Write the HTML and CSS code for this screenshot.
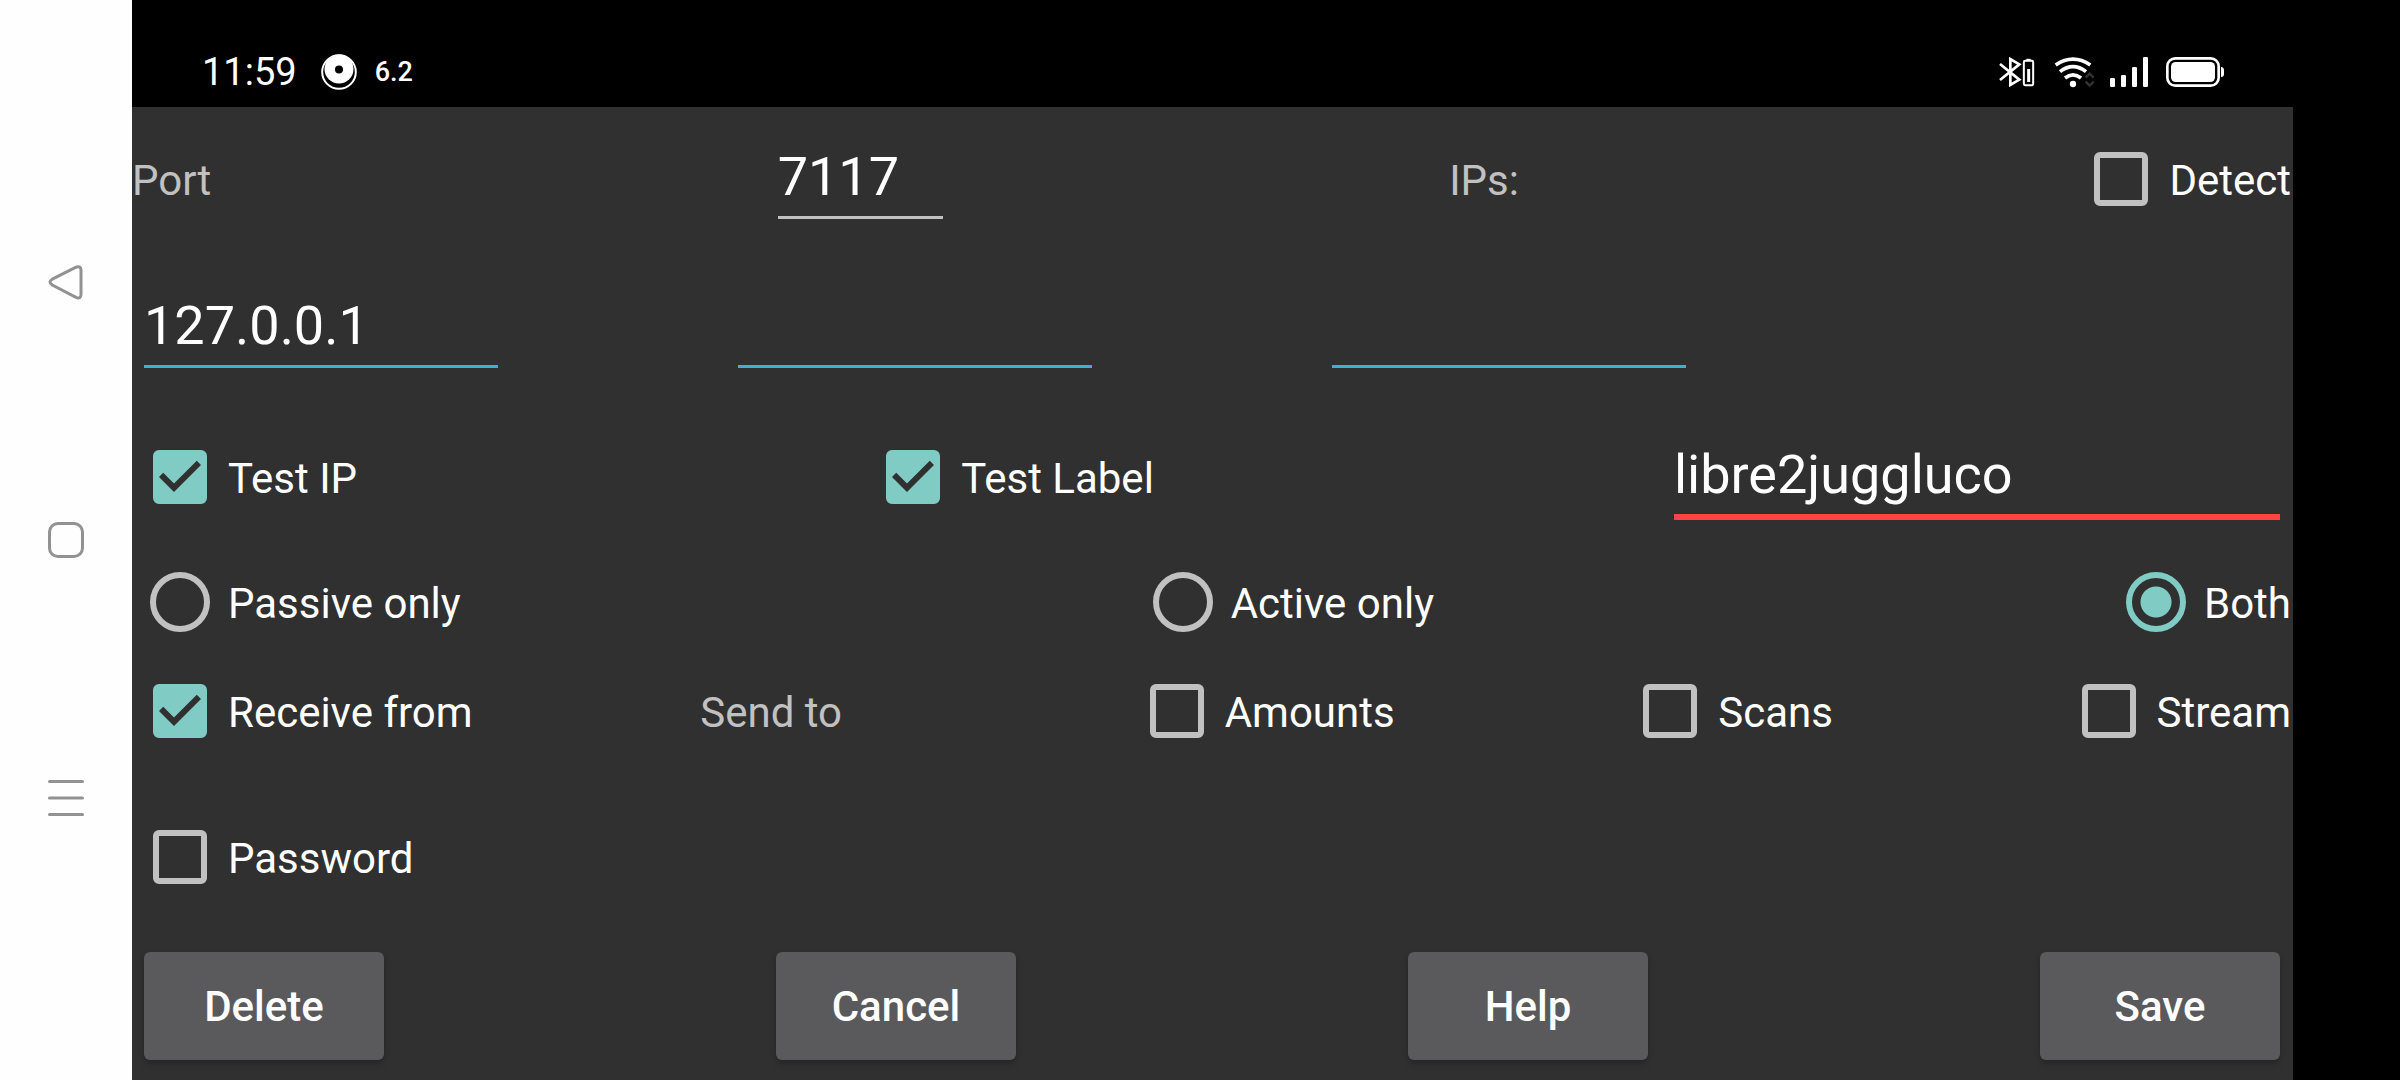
FILE: index.html
```html
<!DOCTYPE html>
<html lang="en">
<head>
<meta charset="utf-8">
<title>Connection</title>
<link rel="stylesheet" href="styles.css">
</head>
<body>
<nav class="nav" aria-label="System">
  <button class="nav-button" type="button" aria-label="Back">
    <svg viewBox="0 0 36 36"><path d="M4.300 15.200 L28 3.200 Q33 1.600 33 6 V30.500 Q33 35.400 28 33.300 L4.300 21 Q-0.400 18 4.300 15.200Z"/></svg>
  </button>
  <button class="nav-button" type="button" aria-label="Home">
    <svg viewBox="0 0 36 36"><rect x="1.500" y="1.500" width="33" height="33" rx="8.500"/></svg>
  </button>
  <button class="nav-button" type="button" aria-label="Menu">
    <svg viewBox="0 0 36 36"><path stroke-linecap="round" d="M1.500 1.500H34.500M1.500 18H34.500M1.500 34.500H34.500"/></svg>
  </button>
</nav>

<div class="screen">
  <header class="status">
    <div class="status-left">
      <span class="clock">11:59</span>
      <svg class="ring" viewBox="0 0 36 36"><circle cx="18" cy="18" r="16.800" fill="none" stroke="#fff" stroke-width="2"/><circle cx="18" cy="15" r="14.500" fill="#fff"/><circle cx="18" cy="15.500" r="4" fill="#000"/></svg>
      <span class="reading">6.2</span>
    </div>
    <div class="status-right">
      <svg width="36" height="32" viewBox="117 78 108 96" fill="none" stroke="#fff">
        <path stroke-width="8" d="M120 102 L178 149 L151 165 V87 L178 103 L120 150"/>
        <rect x="191.500" y="92.500" width="28" height="73" rx="4" stroke-width="6"/>
        <path stroke-width="6" d="M199 89.500H212"/><path stroke-width="9" d="M206 117V156"/>
      </svg>
      <svg width="39" height="32" viewBox="279 78 117 96" fill="none" stroke="#fff">
        <path stroke-width="11" d="M287 105 Q339 70 391 105"/>
        <path stroke-width="11" d="M300 125 Q339 95 378 125"/>
        <path stroke-width="11" d="M315 144 Q339 125 363 144"/>
        <circle cx="339" cy="162" r="9.500" fill="#fff" stroke="none"/>
        <path stroke="#333" stroke-width="7" d="M377 143 L389 131 L401 143M377 155 L389 167 L401 155"/>
      </svg>
      <svg width="38" height="32" viewBox="450 78 114 96" fill="#fff">
        <rect x="450" y="144" width="15" height="27" rx="4"/><rect x="483" y="135" width="15" height="36" rx="4"/><rect x="516" y="111" width="15" height="60" rx="4"/><rect x="549" y="81" width="15" height="90" rx="4"/>
      </svg>
      <svg width="59" height="32" viewBox="618 78 177 96" fill="#fff">
        <rect x="622" y="85" width="154" height="82" rx="24" fill="none" stroke="#fff" stroke-width="8"/>
        <rect x="633" y="96" width="132" height="60" rx="14"/>
        <path d="M783 110 Q792 112 792 120 V132 Q792 140 783 142Z"/>
      </svg>
    </div>
  </header>

  <form class="form">
    <div class="row">
      <label class="caption" for="port">Port</label>
      <input class="field field-port" id="port" type="text" value="7117">
      <span class="caption">IPs:</span>
      <label class="choice"><input type="checkbox"><span>Detect</span></label>
    </div>
    <div class="row row-addresses">
      <input class="field field-address" type="text" aria-label="First IP" value="127.0.0.1">
      <input class="field field-address" type="text" aria-label="Second IP">
      <input class="field field-address" type="text" aria-label="Third IP">
    </div>
    <div class="row row-tests">
      <label class="choice"><input type="checkbox" checked><span>Test IP</span></label>
      <label class="choice"><input type="checkbox" checked><span>Test Label</span></label>
      <input class="field field-label" type="text" aria-label="Label" value="libre2juggluco">
    </div>
    <div class="row row-mode">
      <label class="choice"><input type="radio" name="mode"><span>Passive only</span></label>
      <label class="choice"><input type="radio" name="mode"><span>Active only</span></label>
      <label class="choice"><input type="radio" name="mode" checked><span>Both</span></label>
    </div>
    <div class="row row-data">
      <label class="choice"><input type="checkbox" checked><span>Receive from</span></label>
      <span class="caption">Send to</span>
      <label class="choice"><input type="checkbox"><span>Amounts</span></label>
      <label class="choice"><input type="checkbox"><span>Scans</span></label>
      <label class="choice"><input type="checkbox"><span>Stream</span></label>
    </div>
    <div class="row row-password">
      <label class="choice"><input type="checkbox"><span>Password</span></label>
    </div>
    <div class="actions">
      <button class="action" type="button">Delete</button>
      <button class="action" type="button">Cancel</button>
      <button class="action" type="button">Help</button>
      <button class="action" type="button">Save</button>
    </div>
  </form>
</div>
</body>
</html>
```

FILE: styles.css
```css
* {
  box-sizing: border-box;
}

body {
  margin: 0;
  min-height: 100vh;
  display: flex;
  padding-right: 107px;
  background: #000;
  color: #fff;
  font-family: Roboto, "Liberation Sans", sans-serif;
  font-size: 42px;
}

svg {
  display: block;
  overflow: visible;
}

.nav {
  width: 132px;
  flex: none;
  display: flex;
  flex-direction: column;
  align-items: center;
  justify-content: center;
  gap: 222px;
  background: #fefefe;
}

.nav-button {
  width: 36px;
  height: 36px;
  padding: 0;
  border: 0;
  background: none;
}

.nav-button svg {
  fill: none;
  stroke: #929292;
  stroke-width: 3;
}

.screen {
  flex: 1;
  min-width: 0;
  display: flex;
  flex-direction: column;
}

.status {
  height: 107px;
  padding: 37px 68px 0 70px;
  display: flex;
  align-items: center;
  justify-content: space-between;
}

.status-left,
.status-right {
  display: flex;
  align-items: center;
  gap: 18px;
}

.clock {
  margin-right: 6px;
  font-size: 38px;
}

.ring {
  width: 36px;
  height: 36px;
}

.reading {
  font-size: 27px;
  font-weight: 500;
}

.form {
  flex: 1;
  padding: 24px 1px 20px 0;
  background: #303030;
}

.row {
  height: 96px;
  display: flex;
  align-items: center;
  justify-content: space-between;
}

.row-addresses,
.row-tests {
  margin-top: 53px;
}

.row-mode {
  margin-top: 29px;
}

.row-data {
  margin-top: 13px;
}

.row-password {
  margin-top: 50px;
}

.row-addresses {
  display: grid;
  grid-template-columns: repeat(4, 378px);
}

.caption {
  padding: 2px 60px 0 0;
  color: #c1c1c1;
}

.choice {
  display: flex;
  align-items: center;
  white-space: nowrap;
}

.choice span {
  padding: 2px 1px 0 0;
}

.choice input {
  appearance: none;
  flex: none;
  width: 54px;
  height: 54px;
  margin: 0 21px;
  border: 6px solid #c1c1c1;
  border-radius: 6px;
}

.choice input[type="checkbox"]:checked {
  border-color: #80cbc4;
  background: #80cbc4 url("data:image/svg+xml,%3Csvg xmlns='http://www.w3.org/2000/svg' viewBox='3 3 18 18'%3E%3Cpath fill='%23303030' d='M10 17l-5-5 1.410-1.410L10 14.170l7.590-7.590L19 8z'/%3E%3C/svg%3E") border-box center / 54px 54px no-repeat;
}

.choice input[type="radio"] {
  width: 60px;
  height: 60px;
  margin: 0 18px;
  border-radius: 50%;
}

.choice input[type="radio"]:checked {
  border-color: #80cbc4;
  background: radial-gradient(circle, #80cbc4 15px, transparent 16px);
}

.field {
  min-width: 0;
  margin: 14px 12px 8px;
  padding: 0 0 8px;
  border: 0;
  border-bottom: 3px solid #c1c1c1;
  border-radius: 0;
  outline: 0;
  background: none;
  color: #fff;
  font: 54px/63px Roboto, "Liberation Sans", sans-serif;
}

.field-port {
  width: 165px;
}

.field-address {
  border-bottom-color: #40aed8;
}

.field-label {
  width: 606px;
  margin-bottom: 5px;
  border-bottom: 6px solid #ff4444;
}

.actions {
  margin-top: 47px;
  padding: 0 12px;
  display: flex;
  justify-content: space-between;
}

.action {
  width: 240px;
  height: 108px;
  padding: 0;
  border: 0;
  border-radius: 6px;
  background: #5a5a5c;
  box-shadow: 0 3px 6px rgba(0, 0, 0, 0.25);
  color: #fff;
  font: 500 42px Roboto, "Liberation Sans", sans-serif;
}
```
